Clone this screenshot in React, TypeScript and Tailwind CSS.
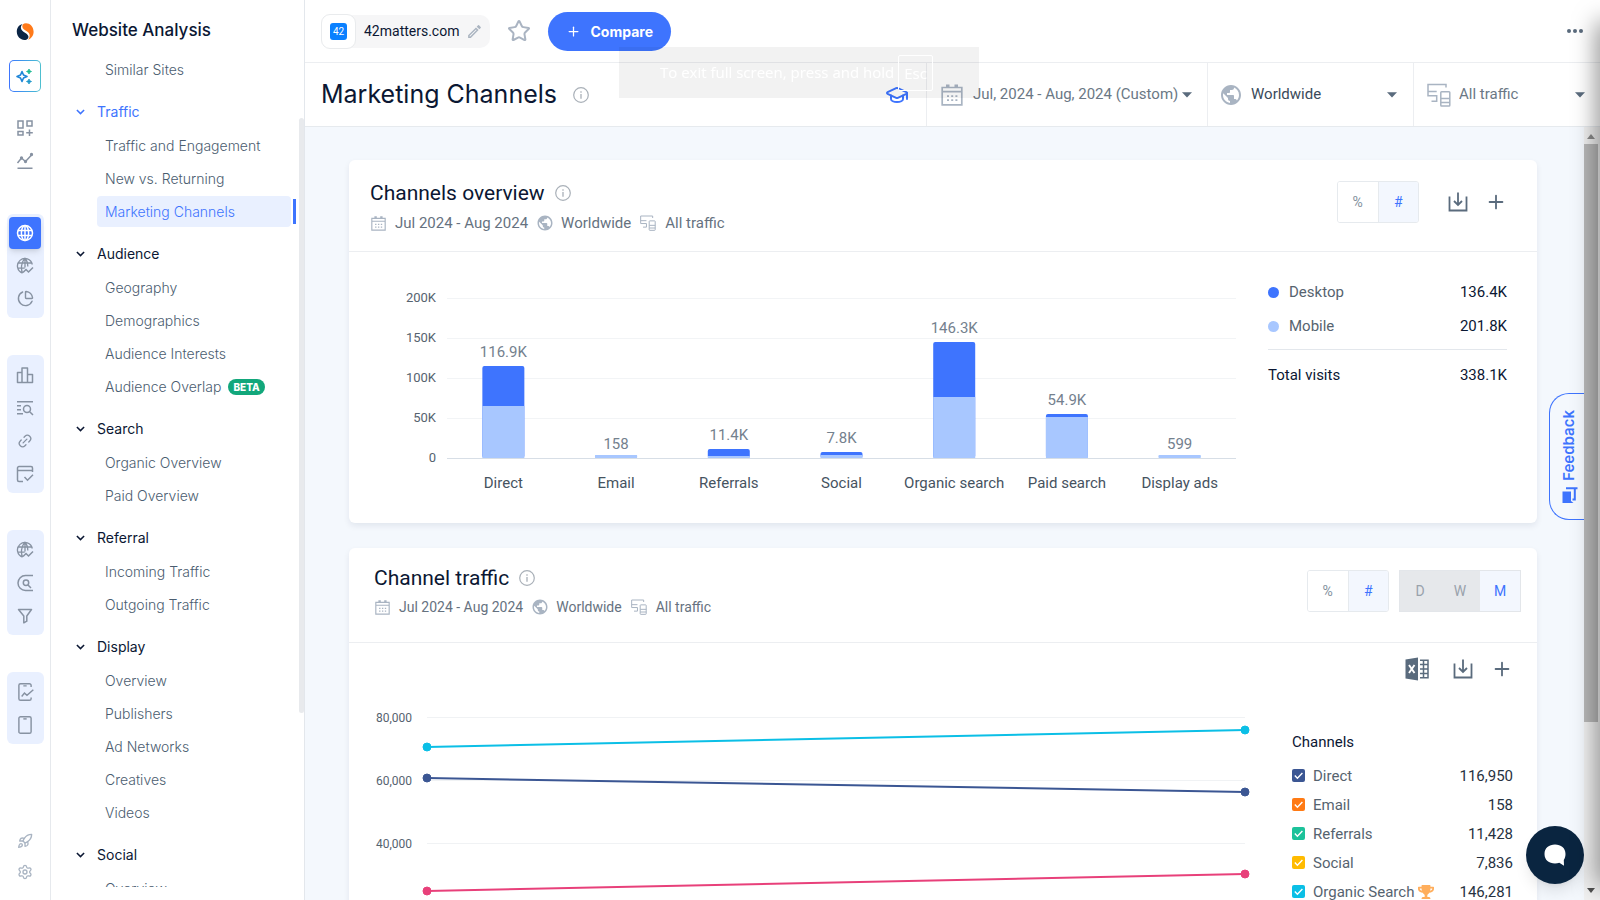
import { useState } from 'react';
import type { ReactNode } from 'react';
import { Link2, Rocket, Settings, Plus, Star, GraduationCap, ChartPie } from 'lucide-react';
import { MdPublic, MdOutlineModeEdit } from 'react-icons/md';
import { FaTrophy } from 'react-icons/fa';

const BLUE = '#3e74fe';
const LIGHT_BLUE = '#a8c7ff';

type IconProps = { className?: string };

function Stroke({ className = 'size-[18px]', children }: { className?: string; children: ReactNode }) {
  return (
    <svg viewBox="0 0 18 18" className={className} fill="none" stroke="currentColor" strokeWidth="1.5">
      {children}
    </svg>
  );
}

function LogoMark() {
  return (
    <svg viewBox="0 0 18 18" className="size-[18px]">
      <path d="M6.600.9C3 1.600.500 5 .8 9c.3 4.600 3.600 7.900 7.600 7.900 3 0 4.500-1.700 3.900-4C11.400 9.600 5.900 9.300 5 5.400 4.600 3.600 5.300 2 6.600.9z" fill="#0b2545" />
      <path d="M10 .3C7.300.3 6 2 6.400 3.900c.8 3.600 6.300 3.800 7.100 7.500.5 2-.2 3.700-1.400 5.300C15.500 15.400 17.700 12.400 17.600 8.500 17.400 3.500 14 .3 10 .3z" fill="#ff7a1a" />
    </svg>
  );
}

function Sparkles() {
  return (
    <svg viewBox="0 0 18 18" className="size-[18px]">
      <path d="M6 4.500 7.500 8 11 9.500 7.500 11 6 14.500 4.500 11 1 9.500 4.500 8z" fill="none" stroke="#1f86d8" strokeWidth="1.600" strokeLinejoin="round" />
      <path d="M13 2l.8 1.700 1.700.8-1.700.8L13 7l-.8-1.700-1.700-.8 1.700-.8z" fill="#18b892" stroke="#18b892" strokeWidth=".8" />
      <path d="M13 12l.8 1.700 1.700.8-1.700.8L13 17l-.8-1.700-1.700-.8 1.700-.8z" fill="#1a95c9" stroke="#1a95c9" strokeWidth=".8" />
    </svg>
  );
}

function DashboardIcon() {
  return (
    <Stroke>
      <path d="M2 2h5v7H2zM11 2h5v5h-5zM2 12.500h5V16H2zM13.500 10.500v6.500M10.200 13.700h6.600" />
    </Stroke>
  );
}
function TrendIcon() {
  return (
    <Stroke>
      <path d="M1.500 16.200h15M1.500 11 5.500 6l4 3.500 6.500-7" />
      <circle cx="5.500" cy="6" r=".9" fill="currentColor" />
      <circle cx="9.500" cy="9.500" r=".9" fill="currentColor" />
      <circle cx="15.500" cy="2.500" r=".9" fill="currentColor" />
    </Stroke>
  );
}
function GlobeIcon() {
  return (
    <Stroke>
      <circle cx="9" cy="9" r="7.500" />
      <ellipse cx="9" cy="9" rx="3.600" ry="7.500" />
      <path d="M2 6.500h14M2 11.500h14M9 1.500v15" />
    </Stroke>
  );
}
function GlobeTrendIcon() {
  return (
    <Stroke>
      <path d="M6.500 16.100A7.500 7.500 0 1 1 16.300 7.500M6.500 16C4.800 12 5 5 9 1.500c2 2 2.800 4.500 2.800 8M9 1.500v9M2.200 6h13.600M1.700 11.200h7" strokeWidth="1.300" />
      <path d="m7 15.500 3-3 2.500 2.500L17 10.500" />
    </Stroke>
  );
}
function BarsIcon() {
  return (
    <Stroke>
      <path d="M1.500 6.500H6v10H1.500zM6 2h5.500v14.500H6zM11.500 8.500h5v8h-5z" strokeLinejoin="round" />
    </Stroke>
  );
}
function ListSearchIcon() {
  return (
    <Stroke>
      <path d="M1 2.800h16M1 6.800h4M1 10.800h4M1 14.800h6M13.700 12.700l3.300 3.300" />
      <circle cx="11" cy="10" r="3.500" />
    </Stroke>
  );
}
function WindowCheckIcon() {
  return (
    <Stroke>
      <path d="M7 16.500H3a1.500 1.500 0 0 1-1.500-1.500V3A1.500 1.500 0 0 1 3 1.500h12A1.500 1.500 0 0 1 16.500 3v4M1.500 5.500h15V3M8.500 12l3 3.200 5.500-5.500" />
    </Stroke>
  );
}
function TargetSearchIcon() {
  return (
    <Stroke>
      <path d="M17 1.500H9.500a7.500 7.500 0 0 0 0 15H17M12 11l3 3" />
      <circle cx="10" cy="8.700" r="2.700" />
    </Stroke>
  );
}
function FunnelIcon() {
  return (
    <Stroke>
      <path d="M2.500 2.500h13L10.800 9v5.200l-3 1.600V9z" strokeLinejoin="round" />
    </Stroke>
  );
}
function PhoneTrendIcon() {
  return (
    <Stroke className="size-5">
      <path d="M14.500 4.500V3A1.500 1.500 0 0 0 13 1.500H5A1.500 1.500 0 0 0 3.500 3v12A1.500 1.500 0 0 0 5 16.500h8a1.500 1.500 0 0 0 1.500-1.500v-1M7.500 3.500h3M6 13l2.500-3 2.300 2L16.500 7" strokeWidth="1.300" />
    </Stroke>
  );
}
function PhoneIcon() {
  return (
    <Stroke className="size-5">
      <rect x="3.500" y="1.500" width="11" height="15" rx="1.500" strokeWidth="1.300" />
      <path d="M7.500 3.500h3" strokeWidth="1.300" />
    </Stroke>
  );
}

function CalendarIcon({ className }: IconProps) {
  return (
    <svg viewBox="0 0 22 22" className={className} fill="none" stroke="currentColor" strokeWidth="1.700">
      <path d="M1.200 3.500h19.600v17.300H1.200zM1.200 7.700h19.600" />
      <path d="M5 1.700h3.500M13.500 1.700H17" strokeWidth="2.400" />
      <path d="M6 12.200h10.500M6 16.200h10.500" strokeWidth="1.800" strokeDasharray="2 2.200" />
    </svg>
  );
}

function DevicesIcon({ className }: IconProps) {
  return (
    <svg viewBox="0 0 24 24" className={className} fill="none" stroke="currentColor" strokeWidth="1.500">
      <path d="M19 4.500V1.500H1V12.800h8.700v5.400H4.500M1 8.500h8.700" />
      <rect x="13.800" y="8.800" width="9" height="14.200" rx=".8" />
      <path d="M14 15.500h9M14 19.500h9" />
    </svg>
  );
}

function InfoIcon() {
  return (
    <svg viewBox="0 0 16 16" className="size-4 text-[#a9b0b8]" fill="none" stroke="currentColor">
      <circle cx="8" cy="8" r="7.300" strokeWidth="1.200" />
      <path d="M8 7v4.800M8 4.200v1.500" strokeWidth="1.300" />
    </svg>
  );
}

function DownloadIcon() {
  return (
    <svg viewBox="0 0 20 20" className="size-5" fill="none" stroke="currentColor" strokeWidth="1.800">
      <path d="M1.500 4.500v14h17v-14M10 .5v12M6 9l4 4 4-4" />
    </svg>
  );
}

function ExcelIcon() {
  return (
    <svg viewBox="0 0 24 24" className="size-6" fill="none" stroke="currentColor">
      <path d="M.5 2.500 13 .5v23L.5 21.500z" fill="currentColor" stroke="none" />
      <path d="m4 8 5.500 8M9.500 8 4 16" stroke="#fff" strokeWidth="1.900" />
      <path d="M15 3.200h8v17.600h-8M15 7.600h8M15 12h8M15 16.400h8M18.500 3v18" strokeWidth="1.500" />
    </svg>
  );
}

function Chevron() {
  return (
    <svg viewBox="0 0 10 6" className="h-[6px] w-[9px]" fill="none" stroke="currentColor" strokeWidth="1.700">
      <path d="m1 .8 4 4 4-4" />
    </svg>
  );
}

function Caret() {
  return (
    <svg viewBox="0 0 10 6" className="pointer-events-none h-[6px] w-[10px] shrink-0 text-[#5a6b7d]" fill="currentColor">
      <path d="M0 .3h10L5 5.600z" />
    </svg>
  );
}

function RailButton({ label, children }: { label: string; children: ReactNode }) {
  return (
    <button type="button" aria-label={label} className="flex h-[33px] w-full items-center justify-center">
      {children}
    </button>
  );
}

function RailGroup({ children }: { children: ReactNode }) {
  return <div className="mt-[37px] flex w-[37px] flex-col items-center rounded-md bg-[#e9f0ff] py-[3px]">{children}</div>;
}

function Rail() {
  return (
    <nav aria-label="Products" className="flex w-[51px] shrink-0 flex-col items-center border-r border-[#e6e9ed] bg-white pt-[20px] pb-[13px] text-[#8792a2]">
      <a href="#home" aria-label="Home" className="flex h-6 items-center">
        <LogoMark />
      </a>
      <button type="button" aria-label="AI assistant" className="mt-4 mb-[19px] rounded-[5px] bg-linear-to-r from-[#3e74fe] to-[#4fc0cf] p-px">
        <span className="flex size-[30px] items-center justify-center rounded-[4px] bg-white">
          <Sparkles />
        </span>
      </button>
      <RailButton label="Dashboards"><DashboardIcon /></RailButton>
      <RailButton label="Trends"><TrendIcon /></RailButton>
      <RailGroup>
        <button type="button" aria-label="Website analysis" className="flex size-8 items-center justify-center rounded-[4px] bg-[#3e74fe] text-white shadow-md">
          <GlobeIcon />
        </button>
        <RailButton label="Web market"><GlobeTrendIcon /></RailButton>
        <RailButton label="Segments"><ChartPie size={17} strokeWidth={2} /></RailButton>
      </RailGroup>
      <RailGroup>
        <RailButton label="Rankings"><BarsIcon /></RailButton>
        <RailButton label="Keywords"><ListSearchIcon /></RailButton>
        <RailButton label="Backlinks"><Link2 size={16} className="-rotate-45" /></RailButton>
        <RailButton label="Site audit"><WindowCheckIcon /></RailButton>
      </RailGroup>
      <RailGroup>
        <RailButton label="Web traffic"><GlobeTrendIcon /></RailButton>
        <RailButton label="Lead search"><TargetSearchIcon /></RailButton>
        <RailButton label="Funnel"><FunnelIcon /></RailButton>
      </RailGroup>
      <RailGroup>
        <RailButton label="App trends"><PhoneTrendIcon /></RailButton>
        <RailButton label="Apps"><PhoneIcon /></RailButton>
      </RailGroup>
      <div className="mt-auto flex flex-col text-[#a9b4c2]">
        <button type="button" aria-label="What's new" className="flex h-[31px] items-center"><Rocket size={16} /></button>
        <button type="button" aria-label="Settings" className="flex h-[31px] items-center"><Settings size={16} /></button>
      </div>
    </nav>
  );
}

const sections = [
  { title: 'Traffic', items: ['Traffic and Engagement', 'New vs. Returning', 'Marketing Channels'] },
  { title: 'Audience', items: ['Geography', 'Demographics', 'Audience Interests', 'Audience Overlap'] },
  { title: 'Search', items: ['Organic Overview', 'Paid Overview'] },
  { title: 'Referral', items: ['Incoming Traffic', 'Outgoing Traffic'] },
  { title: 'Display', items: ['Overview', 'Publishers', 'Ad Networks', 'Creatives', 'Videos'] },
  { title: 'Social', items: ['Overview'] },
];

function NavItem({ label }: { label: string }) {
  const active = label === 'Marketing Channels';
  return (
    <div className="flex h-[33px] items-center pr-2 pl-[46px]">
      <a
        href={'#' + label}
        className={
          active
            ? 'flex h-[31px] flex-1 items-center rounded-[4px] bg-[#e9f0ff] pl-2 text-[#3e74fe]'
            : 'flex h-[31px] flex-1 items-center pl-2 text-[#4b5d70]'
        }
      >
        {label}
        {label === 'Audience Overlap' && (
          <span className="ml-[7px] rounded-full bg-[#12a77b] px-[5px] text-[10px] leading-4 font-extrabold text-white">BETA</span>
        )}
      </a>
      {active && <span className="ml-[2px] h-[25px] w-[3px] bg-[#3e74fe]" />}
    </div>
  );
}

function Sidebar() {
  return (
    <aside className="relative flex w-[254px] shrink-0 flex-col border-r border-[#e3e7ec] bg-white pb-[13px] font-['Inter',sans-serif] text-[14px] font-light">
      <h2 className="flex h-[53px] shrink-0 items-center pt-[9px] pl-[21px] text-[17px] font-medium text-[#0b1733]">Website Analysis</h2>
      <div className="flex-1 overflow-hidden">
        <NavItem label="Similar Sites" />
        {sections.map((s) => (
          <div key={s.title} className="mt-2">
            <button
              type="button"
              className={
                s.title === 'Traffic'
                  ? 'flex h-[35px] w-full items-center gap-[12px] pl-[25px] font-normal text-[#3e74fe]'
                  : 'flex h-[35px] w-full items-center gap-[12px] pl-[25px] font-normal text-[#0b1733]'
              }
            >
              <Chevron />
              {s.title}
            </button>
            {s.items.map((i) => (
              <NavItem key={i} label={i} />
            ))}
          </div>
        ))}
      </div>
      <div className="absolute top-[118px] right-0 h-[595px] w-[5px] rounded-full bg-[#e8eaed]" />
    </aside>
  );
}

function TopBar() {
  return (
    <div className="flex h-[63px] shrink-0 items-center border-b border-[#eceef1] bg-white pr-[17px] pl-4">
      <div className="flex h-[33px] items-center rounded-[10px] bg-[#f6f6f7]">
        <span className="flex h-[35px] w-[35px] items-center justify-center rounded-[9px] border border-[#e9ebed] bg-white">
          <span className="size-[17px] rounded-[3px] bg-[#0a80ff] text-center font-['Roboto',sans-serif] text-[10px] leading-[17px] text-white">42</span>
        </span>
        <span className="ml-2 font-['Roboto',sans-serif] text-[14px] text-[#0b1733]">42matters.com</span>
        <button type="button" aria-label="Edit site" className="mr-[7px] ml-[7px] text-[#aab4c0]">
          <MdOutlineModeEdit size={17} />
        </button>
      </div>
      <button type="button" aria-label="Add to favorites" className="ml-[17px] text-[#aab4c2]">
        <Star size={24} strokeWidth={2} strokeLinejoin="miter" />
      </button>
      <button type="button" className="ml-[17px] flex h-[39px] items-center gap-[9px] rounded-full bg-[#3e74fe] px-[18px] font-['Inter',sans-serif] text-[14px] font-bold text-white">
        <Plus size={15} strokeWidth={2} />
        Compare
      </button>
      <button type="button" aria-label="More options" className="ml-auto flex gap-[2px]">
        <span className="size-[4px] rounded-full bg-[#5a6b7d]" />
        <span className="size-[4px] rounded-full bg-[#5a6b7d]" />
        <span className="size-[4px] rounded-full bg-[#5a6b7d]" />
      </button>
    </div>
  );
}

function FilterSelect({ id, label, value, icon, className }: { id: string; label: string; value: string; icon: ReactNode; className: string }) {
  return (
    <div className={className}>
      {icon}
      <label htmlFor={id} className="sr-only">{label}</label>
      <select id={id} className="h-8 min-w-0 flex-1 appearance-none bg-transparent outline-none" defaultValue={value}>
        <option>{value}</option>
      </select>
      <Caret />
    </div>
  );
}

function PageHeader() {
  return (
    <div className="flex h-16 shrink-0 items-stretch border-b border-[#e6eaee] bg-white font-['Roboto',sans-serif] text-[15px] text-[#6b7885]">
      <div className="flex flex-1 items-center pr-[17px] pl-4">
        <h1 className="font-['Inter',sans-serif] text-[25px] font-normal text-[#0b1733]">Marketing Channels</h1>
        <span className="ml-4"><InfoIcon /></span>
        <button type="button" aria-label="Learn more" className="ml-auto text-[#3e74fe]">
          <GraduationCap size={24} strokeWidth={2} />
        </button>
      </div>
      <button type="button" className="flex w-[281px] items-center border-l border-[#eceef1] pl-[14px]">
        <CalendarIcon className="size-[22px] text-[#a9b4c2]" />
        <span className="mr-1 ml-[10px]">Jul, 2024 - Aug, 2024 (Custom)</span>
        <Caret />
      </button>
      <FilterSelect
        id="country"
        label="Country"
        value="Worldwide"
        className="flex w-[206px] items-center gap-2 border-l border-[#eceef1] pr-4 pl-[11px] text-[#3a4a5a]"
        icon={<MdPublic size={24} className="text-[#a9b4c2]" />}
      />
      <FilterSelect
        id="traffic-source"
        label="Traffic source"
        value="All traffic"
        className="flex w-[187px] items-center gap-[8px] border-l border-[#eceef1] pr-[15px] pl-[13px]"
        icon={<DevicesIcon className="size-6 text-[#a9b4c2]" />}
      />
    </div>
  );
}

function CardHeading({ title, small }: { title: string; small?: boolean }) {
  return (
    <div>
      <h2 className="flex items-center gap-[10px] text-[21px] leading-6 text-[#0b1733]">
        {title}
        <InfoIcon />
      </h2>
      <div
        className={
          small
            ? 'mt-[7px] flex items-center text-[14px] leading-5 text-[#66727f]'
            : 'mt-[8px] flex items-center text-[15px] leading-5 text-[#66727f]'
        }
      >
        <CalendarIcon className="ml-px size-[15px] text-[#a9b4c2]" />
        <span className="ml-[9px]">Jul 2024 - Aug 2024</span>
        <MdPublic size={18} className="ml-2 text-[#a9b4c2]" />
        <span className="ml-[7px]">Worldwide</span>
        <DevicesIcon className="ml-[9px] size-4 text-[#a9b4c2]" />
        <span className="ml-[9px]">All traffic</span>
      </div>
    </div>
  );
}

function UnitToggle() {
  return (
    <div className="flex h-[42px] w-[82px] overflow-hidden rounded-[3px] border border-[#e6eaee] text-[14px]">
      <button type="button" className="flex-1 bg-white text-[#84919e]">%</button>
      <button type="button" className="flex-1 border-l border-[#e6eaee] bg-[#f3f7fe] text-[#3e74fe]">#</button>
    </div>
  );
}

function CardActions() {
  return (
    <>
      <button type="button" aria-label="Download"><DownloadIcon /></button>
      <button type="button" aria-label="Add to dashboard"><Plus size={22} strokeWidth={2} /></button>
    </>
  );
}

const bars = [
  { name: 'Direct', value: '116.9K', total: 92, mobile: 52 },
  { name: 'Email', value: '158', total: 3, mobile: 3 },
  { name: 'Referrals', value: '11.4K', total: 9, mobile: 2 },
  { name: 'Social', value: '7.8K', total: 6, mobile: 3 },
  { name: 'Organic search', value: '146.3K', total: 116, mobile: 61 },
  { name: 'Paid search', value: '54.9K', total: 44, mobile: 41 },
  { name: 'Display ads', value: '599', total: 3, mobile: 3 },
];

function BarChart() {
  return (
    <div className="flex flex-1">
      <div className="flex w-[65px] shrink-0 flex-col pr-[10px] text-right text-[13px] leading-10 text-[#56636f]">
        {['200K', '150K', '100K', '50K', '0'].map((t) => (
          <span key={t}>{t}</span>
        ))}
      </div>
      <svg className="ml-px h-[216px] min-w-0 flex-1 font-['Roboto',sans-serif] text-[15px]" role="img" aria-label="Visits by channel">
        {[20, 60, 100, 140].map((y) => (
          <line key={y} x1="0" x2="100%" y1={y + 0.5} y2={y + 0.5} stroke="#f2f4f6" />
        ))}
        {bars.map((b, i) => (
          <svg key={b.name} x={`${((i + 0.5) * 100) / bars.length}%`} y="0" overflow="visible">
            <rect x="-21" y={180 - b.total} width="42" height={b.total} rx="2" fill={b.total > b.mobile ? BLUE : LIGHT_BLUE} />
            <rect x="-21" y={180 - b.mobile} width="42" height={b.mobile} fill={LIGHT_BLUE} />
            <text x="0" y={Math.min(171, 171 - b.total + (b.total > b.mobile ? 0 : 3))} textAnchor="middle" fill="#74818e">{b.value}</text>
            <text x="0" y="210" textAnchor="middle" fill="#46535f">{b.name}</text>
          </svg>
        ))}
        <line x1="0" x2="100%" y1="180.500" y2="180.500" stroke="#d7dee6" />
      </svg>
    </div>
  );
}

function OverviewCard() {
  return (
    <section className="rounded-md bg-white shadow-[0_3px_6px_rgba(14,30,62,0.08)]">
      <header className="flex h-[92px] items-start border-b border-[#eceef1] pt-[21px] pr-[30px] pl-[21px]">
        <CardHeading title="Channels overview" />
        <div className="ml-auto flex items-center gap-[17px] text-[#5a6b7d]">
          <div className="mr-[12px]"><UnitToggle /></div>
          <CardActions />
        </div>
      </header>
      <div className="flex pt-[26px] pr-[30px] pb-[29px] pl-[32px]">
        <BarChart />
        <div className="ml-8 w-[239px] shrink-0 pt-[5px] text-[15px] leading-[18px] text-[#0b1733]">
          <div className="flex items-center">
            <span className="size-[11px] rounded-full bg-[#3e74fe]" />
            <span className="ml-[10px] text-[#56636f]">Desktop</span>
            <span className="ml-auto">136.4K</span>
          </div>
          <div className="mt-4 flex items-center border-b border-[#e3e7ec] pb-[14px]">
            <span className="size-[11px] rounded-full bg-[#a8c7ff]" />
            <span className="ml-[10px] text-[#56636f]">Mobile</span>
            <span className="ml-auto">201.8K</span>
          </div>
          <div className="mt-4 flex">
            <span>Total visits</span>
            <span className="ml-auto">338.1K</span>
          </div>
        </div>
      </div>
    </section>
  );
}

const series = [
  { color: '#0bbfe6', from: 50, to: 33 },
  { color: '#3b5693', from: 81, to: 95 },
  { color: '#e8407a', from: 194, to: 177 },
];

function LineChart() {
  return (
    <div className="flex flex-1">
      <div className="flex w-[63px] shrink-0 flex-col gap-[43px] pt-[11px] text-right text-[12px] leading-5 text-[#56636f]">
        <span className="pr-4">80,000</span>
        <span className="pr-4">60,000</span>
        <span className="pr-4">40,000</span>
      </div>
      <svg className="-ml-px h-[240px] min-w-0 flex-1 overflow-visible" role="img" aria-label="Channel traffic over time">
        {[20, 83, 146, 209].map((y) => (
          <line key={y} x1="0" x2="100%" y1={y + 0.5} y2={y + 0.5} stroke="#f0f2f4" />
        ))}
        {series.map((s) => (
          <g key={s.color} stroke={s.color} fill={s.color}>
            <line x1="0" x2="100%" y1={s.from} y2={s.to} strokeWidth="2" />
            <circle cx="0" cy={s.from} r="4" />
            <circle cx="100%" cy={s.to} r="4" />
          </g>
        ))}
      </svg>
    </div>
  );
}

const channels = [
  { name: 'Direct', value: '116,950', box: 'checked:bg-[#3b5693]' },
  { name: 'Email', value: '158', box: 'checked:bg-[#ff7a14]' },
  { name: 'Referrals', value: '11,428', box: 'checked:bg-[#1cc29a]' },
  { name: 'Social', value: '7,836', box: 'checked:bg-[#ffbb00]' },
  { name: 'Organic Search', value: '146,281', box: 'checked:bg-[#0bbfe6]' },
];

function ChannelRow({ name, value, box }: { name: string; value: string; box: string }) {
  const [on, setOn] = useState(true);
  return (
    <label className="flex h-[29px] items-center">
      <span className="grid size-[13px]">
        <input
          type="checkbox"
          checked={on}
          onChange={() => setOn(!on)}
          className={'col-start-1 row-start-1 size-[13px] appearance-none rounded-[2px] bg-[#cbd3dc] ' + box}
        />
        <svg viewBox="0 0 13 13" className="pointer-events-none col-start-1 row-start-1 size-[13px]" fill="none" stroke="#fff" strokeWidth="1.400">
          <path d="m2.800 6.500 2.600 2.700 5-5.200" />
        </svg>
      </span>
      <span className="ml-2 text-[#56636f]">{name}</span>
      {name === 'Organic Search' && <FaTrophy size={16} className="ml-1 text-[#ffae5c]" />}
      <span className="ml-auto text-[#27323f]">{value}</span>
    </label>
  );
}

function TrafficCard() {
  return (
    <section className="mt-[25px] rounded-md bg-white shadow-[0_3px_6px_rgba(14,30,62,0.08)]">
      <header className="flex h-[95px] items-start border-b border-[#eceef1] pt-[18px] pr-[16px] pl-[25px]">
        <CardHeading title="Channel traffic" small />
        <div className="mt-1 ml-auto flex gap-[10px]">
          <UnitToggle />
          <div className="flex h-[42px] w-[122px] border border-[#e3e6ea] bg-[#e6e8eb] text-[14px] text-[#99a2ab]">
            <button type="button" disabled className="flex-1">D</button>
            <button type="button" disabled className="flex-1">W</button>
            <button type="button" className="flex-1 bg-[#f3f7fe] text-[#3e74fe]">M</button>
          </div>
        </div>
      </header>
      <div className="flex items-center justify-end gap-[18px] pt-[14px] pr-[24px] text-[#5a6b7d]">
        <button type="button" aria-label="Export to Excel" className="mr-[6px]"><ExcelIcon /></button>
        <CardActions />
      </div>
      <div className="flex pt-[16px] pr-6 pl-[16px]">
        <LineChart />
        <div className="ml-[46px] w-[222px] shrink-0 pt-[35px] pl-px text-[15px] leading-5">
          <h3 className="mb-[9px] text-[#0b1733]">Channels</h3>
          {channels.map((c) => (
            <ChannelRow key={c.name} name={c.name} value={c.value} box={c.box} />
          ))}
        </div>
      </div>
    </section>
  );
}

function Scrollbar() {
  return (
    <div className="flex w-4 shrink-0 flex-col items-center bg-[#f1f1f1] pt-[7px] pr-[2px] pb-[7px]">
      <svg viewBox="0 0 8 5" className="h-[5px] w-2" fill="#8b8b8b"><path d="M4 0l4 5H0z" /></svg>
      <span className="mt-[5px] h-[578px] w-[14px] bg-[#b9b9b9]" />
      <svg viewBox="0 0 8 5" className="mt-auto h-[5px] w-2" fill="#505050"><path d="M4 5l4-5H0z" /></svg>
    </div>
  );
}

function FeedbackTab() {
  return (
    <button type="button" className="fixed top-[393px] right-4 flex h-[127px] w-[35px] flex-col items-center justify-center gap-[6px] rounded-l-[20px] border border-r-0 border-[#3e74fe] bg-[#f4f8fd] pl-1 text-[#3e74fe]">
      <span className="rotate-180 font-['Inter',sans-serif] text-[15px] leading-5 font-semibold [writing-mode:vertical-rl]">Feedback</span>
      <svg viewBox="0 0 16 16" className="ml-[2px] size-4">
        <path d="M.5 4.500H9V14l2.500 2H.5z" fill="currentColor" />
        <path d="M4 1.200h11.500M12.800 1.200v11.300h-2.300" fill="none" stroke="currentColor" strokeWidth="2" />
      </svg>
    </button>
  );
}

export default function App() {
  return (
    <div className="flex h-screen overflow-hidden bg-white font-['Roboto',sans-serif]">
      <Rail />
      <Sidebar />
      <main className="flex min-w-0 flex-1 flex-col">
        <TopBar />
        <PageHeader />
        <div className="flex min-h-0 flex-1">
          <div className="min-w-0 flex-1 overflow-hidden bg-[#f4f8fd] pt-[33px] pr-[47px] pl-[44px]">
            <OverviewCard />
            <TrafficCard />
          </div>
          <Scrollbar />
        </div>
      </main>

      <div className="pointer-events-none fixed top-[47px] left-[619px] flex h-[51px] w-[360px] items-center gap-1 bg-black/5 pl-[41px] font-['Open_Sans',sans-serif] text-[15px] text-white">
        <span>To exit full screen, press and hold</span>
        <kbd className="rounded-[2px] border border-white px-[5px] py-[5px] font-['Open_Sans',sans-serif] leading-6">Esc</kbd>
      </div>
      <FeedbackTab />
      <button type="button" aria-label="Open chat" className="fixed right-4 bottom-4 flex size-[58px] items-center justify-center rounded-full bg-[#0a2540] shadow-lg">
        <svg viewBox="0 0 22 22" className="size-[22px]" fill="#fff">
          <path d="M11 .5C5 .5.500 4 .5 10S5 19.500 11 19.500c1.500 0 3-.2 4.300-.7L20 21.800l-.2-5.800c1.100-1.600 1.700-3.600 1.700-6C21.500 4 17 .5 11 .5z" />
        </svg>
      </button>
      <div className="pointer-events-none fixed top-6 -right-4 bottom-4 w-4 shadow-[0_0_24px_2px_rgba(0,0,0,0.5)]" />
    </div>
  );
}
